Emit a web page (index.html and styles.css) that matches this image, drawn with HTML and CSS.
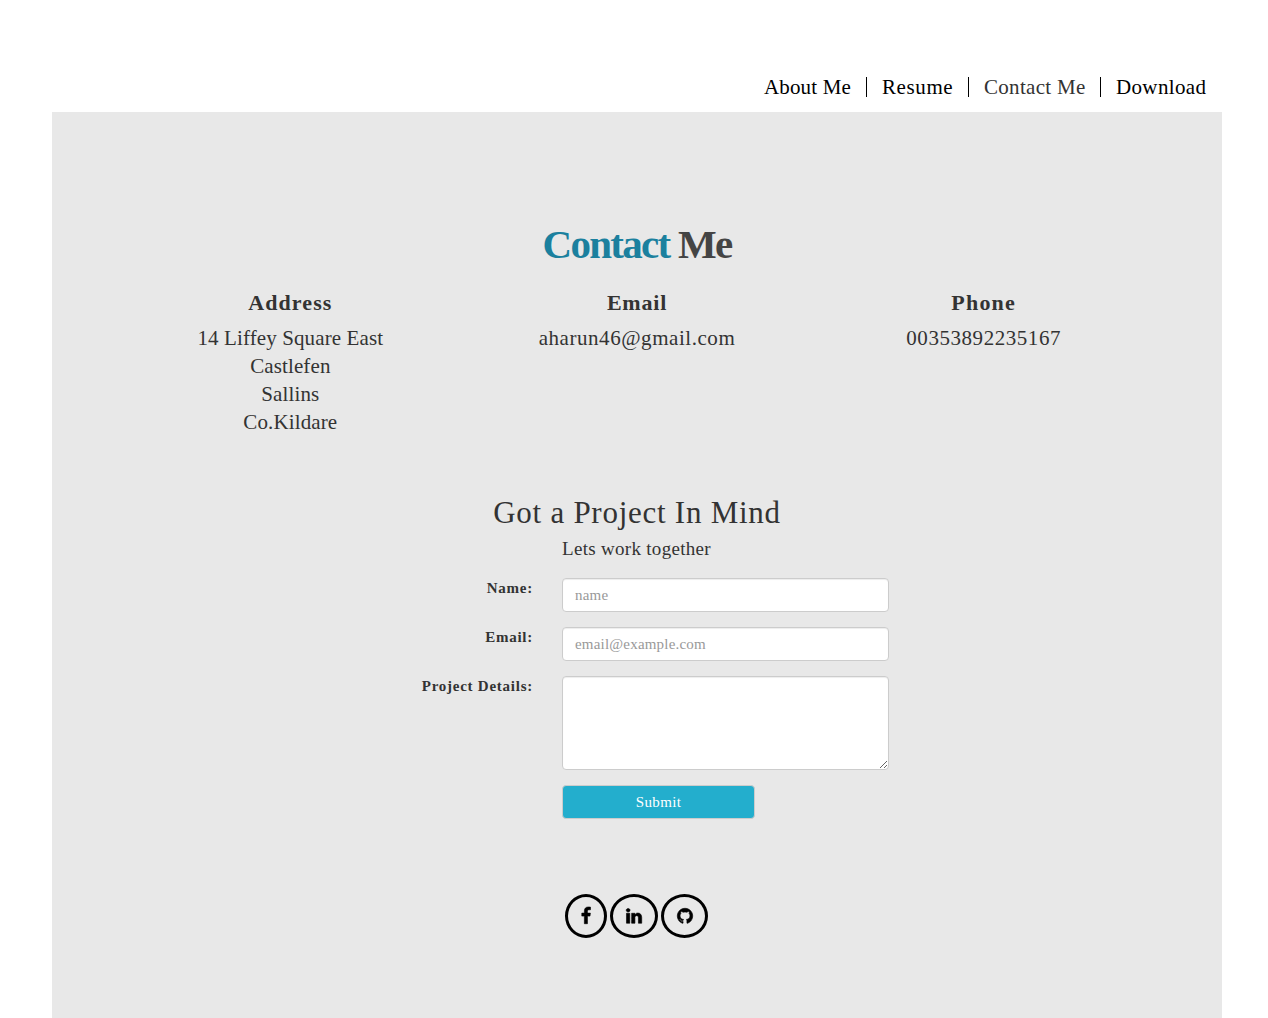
FILE: index.html
```
<!DOCTYPE html>
<html lang="en">
<head>
<meta charset="utf-8">
<title>Contact Me</title>
<link rel="stylesheet" href="styles.css">
</head>
<body>
<div class="container">
  <nav class="nav">
    <a class="nav-about">About Me</a>
    <a class="nav-resume">Resume</a>
    <a class="nav-contact active">Contact Me</a>
    <a class="nav-download">Download</a>
  </nav>
  <main class="panel">
    <h1><span>Contact</span> Me</h1>
    <section class="details">
      <div>
        <h4 class="h-address">Address</h4>
        <p>14 Liffey Square East<br>Castlefen<br>Sallins<br>Co.Kildare</p>
      </div>
      <div>
        <h4 class="h-email">Email</h4>
        <p class="wide">aharun46@gmail.com</p>
      </div>
      <div>
        <h4 class="h-phone">Phone</h4>
        <p class="wide">00353892235167</p>
      </div>
    </section>
    <h2>Got a Project In Mind</h2>
    <p class="lead">Lets work together</p>
    <form class="form">
      <label for="name">Name:</label>
      <input id="name" class="control" type="text" placeholder="name">
      <label for="email">Email:</label>
      <input id="email" class="control" type="email" placeholder="email@example.com">
      <label for="project">Project Details:</label>
      <textarea id="project" class="control"></textarea>
      <button class="submit" type="button">Submit</button>
    </form>
    <div class="social">
      <a class="facebook" aria-label="Facebook"><svg viewBox="0 0 1792 1792"><path d="M1343 12v264h-157q-86 0-116 36t-30 108v189h293l-39 296h-254v759h-306v-759h-255v-296h255v-218q0-186 104-288.5t277-102.5q147 0 228 12z"/></svg></a>
      <a class="linkedin" aria-label="LinkedIn"><svg viewBox="0 0 1792 1792"><path d="M477 625v991h-330v-991h330zm21-306q1 73-50.5 122t-135.5 49h-2q-82 0-132-49t-50-122q0-74 51.5-122.5t134.5-48.5 133 48.5 51 122.5zm1166 729v568h-329v-530q0-105-40.5-164.5t-126.5-59.5q-63 0-105.5 34.5t-63.5 85.5q-11 30-11 81v553h-329q2-399 2-647t-1-296l-1-48h329v144h-2q20-32 41-56t56.5-52 87-43.5 114.5-15.5q171 0 275 113.5t104 332.5z"/></svg></a>
      <a class="github" aria-label="GitHub"><svg viewBox="0 0 1792 1792"><path d="M896 128q209 0 385.5 103t279.5 279.5 103 385.5q0 251-146.5 451.5t-378.5 277.5q-27 5-40-7t-13-30q0-3 .5-76.5t.5-134.5q0-97-52-142 57-6 102.5-18t94-39 81-66.5 53-105 20.5-150.5q0-119-79-206 37-91-8-204-28-9-81 11t-92 44l-38 24q-93-26-192-26t-192 26q-16-11-42.5-27t-83.5-38.5-85-13.5q-45 113-8 204-79 87-79 206 0 85 20.5 150t52.5 105 80.5 67 94 39 102.5 18q-39 36-49 103-21 10-45 15t-57 5-65.5-21.5-55.5-62.5q-19-32-48.5-52t-49.5-24l-20-3q-21 0-29 4.5t-5 11.5 9 14 13 12l7 5q22 10 43.5 38t31.5 51l10 23q13 38 44 61.5t67 30 69.5 7 55.5-3.5l23-4q0 38 .5 88.5t.5 54.5q0 18-13 30t-40 7q-232-77-378.5-277.5t-146.5-451.5q0-209 103-385.5t279.5-279.5 385.5-103z"/></svg></a>
    </div>
  </main>
</div>
</body>
</html>
```
FILE: styles.css
```
* { box-sizing: border-box; }
body {
  margin: 0;
  background: #fff;
  color: #333;
  font: 21px/28px "Liberation Serif", serif;
}
h1, h2, h4, p { margin: 0; }
.container { width: 1170px; margin-left: 52px; padding-top: 77px; }

.nav { display: flex; justify-content: flex-end; height: 35px; line-height: 20px; color: #000; }
.nav a { height: 20px; padding-left: 15px; white-space: nowrap; border-right: 1px solid #000; }
.nav a:last-child { border-right: 0; }
.nav .active { color: #333; }
.nav-about { width: 118px; letter-spacing: .15px; }
.nav-resume { width: 102px; letter-spacing: .6px; }
.nav-contact { width: 132px; letter-spacing: .3px; }
.nav-download { width: 121px; letter-spacing: .35px; }

.panel { height: 906px; padding-top: 110px; background: #e8e8e8; }
h1 { font-size: 41px; line-height: 44px; letter-spacing: -1.7px; text-align: center; color: #444; }
h1 span { color: #1b809e; }

.details {
  display: grid;
  grid-template-columns: repeat(3, 1fr);
  width: 1040px;
  margin: 25px 0 0 65px;
  text-align: center;
  letter-spacing: .12px;
}
.details h4 { margin-bottom: 9px; font-size: 22px; line-height: 24px; }
.h-address { letter-spacing: 1.1px; }
.h-email { letter-spacing: .8px; }
.h-phone { letter-spacing: 1.2px; }
.details .wide { letter-spacing: .55px; }

h2 { margin-top: 59px; font-size: 31px; font-weight: 400; line-height: 36px; letter-spacing: .74px; text-align: center; }
.lead { margin: 5px 0 16px 510px; font-size: 19px; line-height: 26px; letter-spacing: .3px; }

.form {
  display: grid;
  grid-template-columns: 481px 327px;
  column-gap: 29px;
  row-gap: 15px;
  font-size: 15px;
  line-height: 20px;
}
.form label { font-weight: 700; text-align: right; letter-spacing: .75px; }
.control {
  display: block;
  width: 327px;
  height: 34px;
  padding: 6px 12px;
  font: 15px/20px "Liberation Serif", serif;
  letter-spacing: .2px;
  color: #555;
  background: #fff;
  border: 1px solid #ccc;
  border-radius: 4px;
  box-shadow: inset 0 1px 1px rgba(0, 0, 0, .075);
}
.control::placeholder { color: #999; }
textarea.control { height: 94px; resize: vertical; }
.submit {
  grid-column: 2;
  width: 193px;
  height: 34px;
  padding: 0;
  font: 15px/20px "Liberation Serif", serif;
  letter-spacing: .35px;
  color: #fff;
  background: #23aecd;
  border: 1px solid #ccc;
  border-radius: 4px;
}

.social { display: flex; gap: 3px; margin: 75px 0 0 513px; }
.social a {
  display: flex;
  align-items: center;
  justify-content: center;
  height: 44px;
  border: 3px solid #000;
  border-radius: 50%;
}
.social svg { width: 18px; height: 18px; overflow: visible; stroke: #000; stroke-width: 60; }
.facebook { width: 42px; }
.linkedin { width: 48px; }
.github { width: 47px; }
```
